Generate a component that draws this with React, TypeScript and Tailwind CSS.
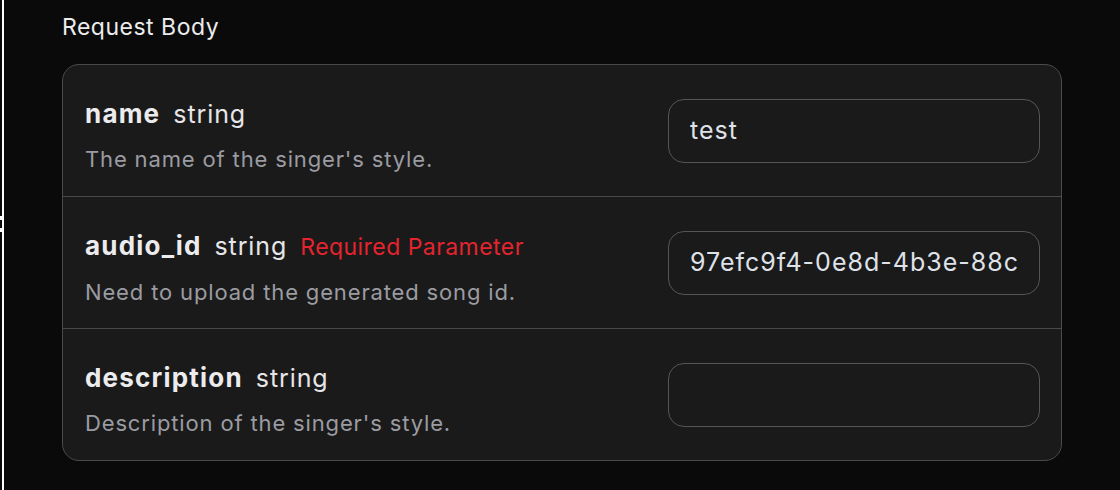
const font = { fontFamily: "Inter, 'Noto Sans', sans-serif" };

type Param = {
  name: string;
  type: string;
  required?: boolean;
  description: string;
  value: string;
};

const PARAMS: Param[] = [
  { name: "name", type: "string", description: "The name of the singer's style.", value: "test" },
  {
    name: "audio_id",
    type: "string",
    required: true,
    description: "Need to upload the generated song id.",
    value: "97efc9f4-0e8d-4b3e-88c6-0a7f2d1c9b34",
  },
  { name: "description", type: "string", description: "Description of the singer's style.", value: "" },
];

function ParamRow({ param, isLast }: { param: Param; isLast: boolean }) {
  return (
    <div
      className={`flex items-center justify-between pl-[22px] pr-[21px] ${
        isLast ? "h-[131px]" : "h-[132px] border-b border-[#4a4a4a]"
      }`}
    >
      <div className="flex flex-col gap-[15px] pt-[10px]">
        <div className="flex items-baseline gap-[13px] leading-[32px]">
          <span className="text-[26px] font-bold tracking-[1.2px] text-[#ececee]">{param.name}</span>
          <span className="text-[25px] tracking-[0.9px] text-[#e6e6e8]">{param.type}</span>
          {param.required && (
            <span className="text-[23px] tracking-[0.45px] text-[#e5242f]">Required Parameter</span>
          )}
        </div>
        <span className="text-[22px] leading-[28px] tracking-[0.85px] text-[#9b9ca2]">
          {param.description}
        </span>
      </div>
      <div className="flex h-[64px] w-[372px] items-center rounded-[16px] border border-[#555557] pl-[21px] pr-[22px]">
        <input
          defaultValue={param.value}
          className="w-full bg-transparent p-0 text-[25px] tracking-[1px] text-[#dfe2e8] outline-none"
          style={font}
        />
      </div>
    </div>
  );
}

export default function App() {
  return (
    <div className="flex h-[490px] w-full bg-[#0a0a0a]" style={font}>
      <div className="flex w-[2px] flex-col">
        <div className="h-[216px]" />
        <div className="h-[4px] bg-white" />
        <div className="h-[8px]" />
        <div className="h-[4px] bg-white" />
      </div>
      <div className="w-[2px] bg-white" />
      <div className="flex flex-col pl-[58px] pt-[13px]">
        <h2 className="text-[23px] leading-[28px] tracking-[0.5px] text-[#ececec]">Request Body</h2>
        <div className="mt-[23px] w-[1000px] overflow-hidden rounded-[17px] border border-[#4a4a4a] bg-[#1a1a1a]">
          {PARAMS.map((p, i) => (
            <ParamRow key={p.name} param={p} isLast={i === PARAMS.length - 1} />
          ))}
        </div>
      </div>
    </div>
  );
}
